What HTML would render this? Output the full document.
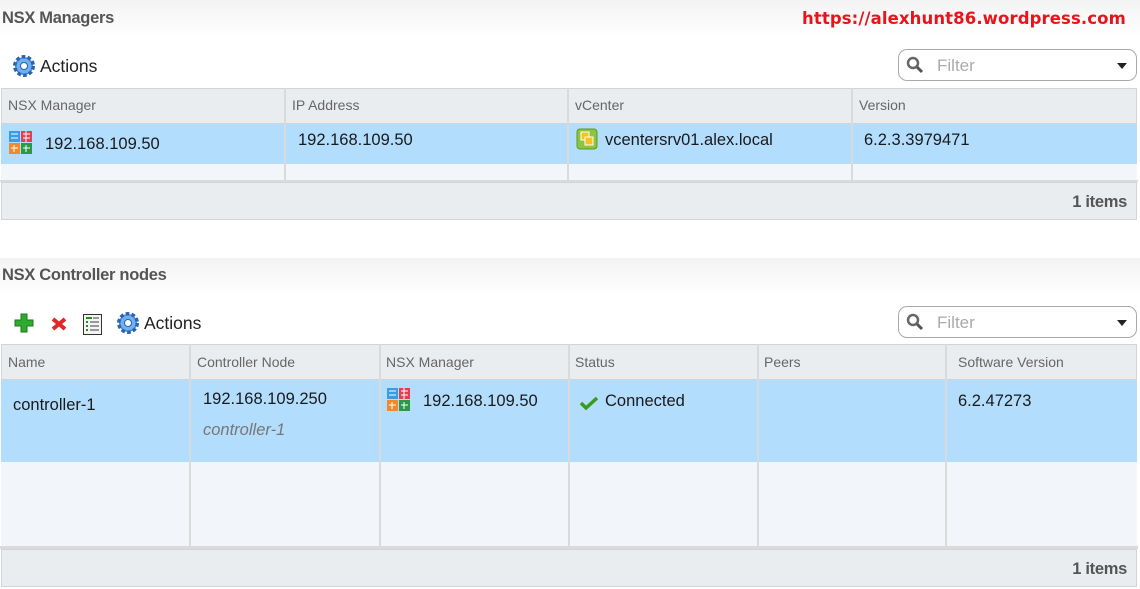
<!DOCTYPE html>
<html><head><meta charset="utf-8"><style>
*{margin:0;padding:0;box-sizing:border-box}
body{width:1140px;height:589px;background:#fff;position:relative;overflow:hidden;font-family:"Liberation Sans",Arial,sans-serif;color:#222}
.a{position:absolute;white-space:nowrap}
.tbar{position:absolute;left:0;width:1140px;height:38px;background:linear-gradient(#f3f3f3,#fff)}
.title{position:absolute;left:2px;font-weight:bold;font-size:16.5px;color:#555;letter-spacing:-0.3px}
.filter{position:absolute;left:898px;width:239px;height:32px;border:1px solid #aaa;border-radius:9px;background:#fff}
.filter span{position:absolute;left:38px;top:6px;font-size:17px;color:#aaa}
.filter .tri{position:absolute;right:9px;top:13px;width:0;height:0;border-left:5px solid transparent;border-right:5px solid transparent;border-top:6px solid #222}
.hd{position:absolute;background:#eaedf0;border:1px solid #d4d4d4}
.hdt{font-size:14px;color:#666}
.sel{position:absolute;background:#b3ddfd}
.emp{position:absolute;background:#f2f6fa}
.vl{position:absolute;width:2px;background:#dadada}
.cell{font-size:16.5px;color:#1a1a1a}
.foot{position:absolute;left:1px;width:1136px;background:#eaedf0;border:1px solid #d4d4d4}
.foot span{position:absolute;right:9px;font-weight:bold;font-size:16.5px;color:#555;letter-spacing:-0.3px}
</style></head><body>
<svg width="0" height="0" style="position:absolute"><defs>
<g id="gear"><circle cx="12" cy="12" r="9" fill="#4a8fd8" stroke="#2a64b0" stroke-width="4" stroke-dasharray="3.5 2.2"/><circle cx="12" cy="12" r="7.5" fill="#6fb0f0"/><circle cx="12" cy="12" r="3.5" fill="#fff" stroke="#2a64b0"/></g>
<g id="nsx"><rect x="0" y="0" width="11" height="11" fill="#3b9de0"/><rect x="12" y="0" width="11" height="11" fill="#e04050"/><rect x="0" y="12" width="11" height="11" fill="#f08a2a"/><rect x="12" y="12" width="11" height="11" fill="#2a9a48"/><path d="M2 3h7M2 7h7M14 3h7M17 0v11M14 7h7M2 17h7M5 14v7M14 17h7M17 14v7" stroke="#fff" stroke-width="1"/></g>
</defs></svg>

<div class="tbar" style="top:0"></div>
<div class="title a" style="top:9px">NSX Managers</div>
<div class="a" style="left:802px;top:9px;font-family:'DejaVu Sans',sans-serif;font-weight:bold;font-size:16.5px;color:#e8141c;letter-spacing:0.1px">https://alexhunt86.wordpress.com</div>
<svg class="a" style="left:12px;top:54px" width="24" height="24"><use href="#gear"/></svg>
<div class="a" style="left:40px;top:56px;font-size:17.5px">Actions</div>
<div class="filter" style="top:49px"><svg class="a" style="left:7px;top:6px" width="18" height="18"><circle cx="7" cy="7" r="5" fill="none" stroke="#666" stroke-width="2.5"/><path d="M11 11l5 5" stroke="#555" stroke-width="3"/></svg><span>Filter</span><div class="tri"></div></div>

<div class="hd" style="left:1px;top:88px;width:1136px;height:36px"></div>
<div class="a hdt" style="left:8px;top:97px">NSX Manager</div>
<div class="a hdt" style="left:292px;top:97px">IP Address</div>
<div class="a hdt" style="left:575px;top:97px">vCenter</div>
<div class="a hdt" style="left:859px;top:97px">Version</div>
<div class="sel" style="left:1px;top:124px;width:1136px;height:40px"></div>
<div class="emp" style="left:1px;top:164px;width:1136px;height:17px"></div>
<div class="vl" style="left:284px;top:88px;height:93px"></div>
<div class="vl" style="left:567px;top:88px;height:93px"></div>
<div class="vl" style="left:851px;top:88px;height:93px"></div>
<div class="a" style="left:0;top:180px;width:1138px;height:2px;background:#dadada"></div>
<svg class="a" style="left:9px;top:131px" width="24" height="24"><use href="#nsx"/></svg>
<div class="a cell" style="left:45px;top:135px">192.168.109.50</div>
<div class="a cell" style="left:298px;top:131px">192.168.109.50</div>
<svg class="a" style="left:576px;top:128px" width="22" height="22"><rect x="1" y="1" width="20" height="20" rx="3" fill="#8cc63f" stroke="#5a9a20"/><rect x="5" y="4" width="8" height="8" fill="#f7c21e" stroke="#fff"/><rect x="9" y="9" width="8" height="8" fill="#f7c21e" stroke="#fff"/></svg>
<div class="a cell" style="left:605px;top:131px">vcentersrv01.alex.local</div>
<div class="a cell" style="left:864px;top:131px">6.2.3.3979471</div>
<div class="foot" style="top:182px;height:38px"><span style="top:10px">1 items</span></div>

<div class="tbar" style="top:258px"></div>
<div class="title a" style="top:266px">NSX Controller nodes</div>
<svg class="a" style="left:13px;top:312px" width="22" height="22"><path d="M8 2h6v6h6v6h-6v6h-6v-6h-6v-6h6z" fill="#2eaa2e" stroke="#1a7a1a"/></svg>
<svg class="a" style="left:50px;top:316px" width="18" height="16"><path d="M3 3l12 10M15 3l-12 10" stroke="#e02828" stroke-width="4"/></svg>
<svg class="a" style="left:82px;top:312px" width="22" height="24"><rect x="1.5" y="2.5" width="18" height="20" fill="#f4f4f4" stroke="#333"/><path d="M4 6h6M4 10h2M4 14h2M4 18h2" stroke="#2a8a2a" stroke-width="2"/><path d="M8 10h9M8 14h9M8 18h9M11 6h6" stroke="#999" stroke-width="2"/></svg>
<svg class="a" style="left:116px;top:311px" width="24" height="24"><use href="#gear"/></svg>
<div class="a" style="left:144px;top:313px;font-size:17.5px">Actions</div>
<div class="filter" style="top:306px"><svg class="a" style="left:7px;top:6px" width="18" height="18"><circle cx="7" cy="7" r="5" fill="none" stroke="#666" stroke-width="2.5"/><path d="M11 11l5 5" stroke="#555" stroke-width="3"/></svg><span>Filter</span><div class="tri"></div></div>

<div class="hd" style="left:1px;top:344px;width:1136px;height:36px"></div>
<div class="a hdt" style="left:8px;top:354px">Name</div>
<div class="a hdt" style="left:197px;top:354px">Controller Node</div>
<div class="a hdt" style="left:386px;top:354px">NSX Manager</div>
<div class="a hdt" style="left:575px;top:354px">Status</div>
<div class="a hdt" style="left:764px;top:354px">Peers</div>
<div class="a hdt" style="left:958px;top:354px">Software Version</div>
<div class="sel" style="left:1px;top:380px;width:1136px;height:82px"></div>
<div class="emp" style="left:1px;top:462px;width:1136px;height:84px"></div>
<div class="vl" style="left:189px;top:344px;height:202px"></div>
<div class="vl" style="left:379px;top:344px;height:202px"></div>
<div class="vl" style="left:568px;top:344px;height:202px"></div>
<div class="vl" style="left:757px;top:344px;height:202px"></div>
<div class="vl" style="left:945px;top:344px;height:202px"></div>
<div class="a" style="left:0;top:546px;width:1138px;height:3px;background:#dadada"></div>
<div class="a cell" style="left:13px;top:396px">controller-1</div>
<div class="a cell" style="left:203px;top:390px">192.168.109.250</div>
<div class="a" style="left:203px;top:421px;font-size:16.5px;font-style:italic;color:#777">controller-1</div>
<svg class="a" style="left:387px;top:388px" width="24" height="24"><use href="#nsx"/></svg>
<div class="a cell" style="left:423px;top:392px">192.168.109.50</div>
<svg class="a" style="left:579px;top:395px" width="20" height="16"><path d="M2 8l5 5l11-10" fill="none" stroke="#3a9a1a" stroke-width="3.5"/></svg>
<div class="a cell" style="left:605px;top:392px">Connected</div>
<div class="a cell" style="left:958px;top:392px">6.2.47273</div>
<div class="foot" style="top:549px;height:38px"><span style="top:10px">1 items</span></div>
</body></html>
